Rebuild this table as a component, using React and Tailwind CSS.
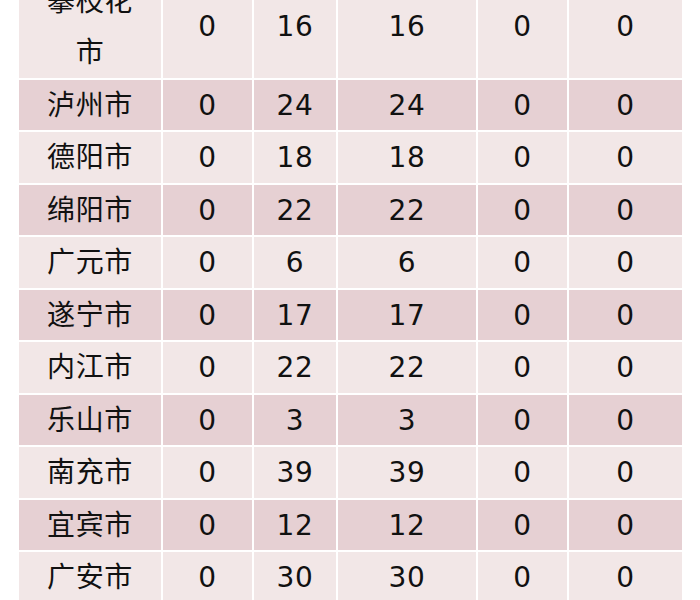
import React from "react";

const rows = [
  ["泸州市", 0, 24, 24, 0, 0],
  ["德阳市", 0, 18, 18, 0, 0],
  ["绵阳市", 0, 22, 22, 0, 0],
  ["广元市", 0, 6, 6, 0, 0],
  ["遂宁市", 0, 17, 17, 0, 0],
  ["内江市", 0, 22, 22, 0, 0],
  ["乐山市", 0, 3, 3, 0, 0],
  ["南充市", 0, 39, 39, 0, 0],
  ["宜宾市", 0, 12, 12, 0, 0],
  ["广安市", 0, 30, 30, 0, 0],
];

export default function App() {
  return (
    <div className="w-[700px] h-[600px] overflow-hidden bg-white">
      <div
        className="ml-[19px] -mt-[25px] grid grid-cols-[142px_89px_82px_138px_89px_113px] gap-[2px] text-[28px] tracking-[0.6px] text-[#111]"
        style={{ fontFamily: '"DejaVu Sans", "Noto Sans CJK SC", sans-serif' }}
      >
        <div className="bg-[#f2e7e7] h-[102.5px] pt-[2px] flex items-center justify-center text-center leading-[51px]">
          攀枝花
          <br />市
        </div>
        {[0, 16, 16, 0, 0].map((v, j) => (
          <div key={j} className="bg-[#f2e7e7] h-[102.5px] pt-[2px] flex items-center justify-center">
            {v}
          </div>
        ))}
        {rows.map((r, i) =>
          r.map((v, j) => (
            <div
              key={i + "-" + j}
              className={
                (i % 2 === 0 ? "bg-[#e6d0d3]" : "bg-[#f2e7e7]") +
                " h-[50.5px] pt-[2px] flex items-center justify-center"
              }
            >
              {v}
            </div>
          ))
        )}
      </div>
    </div>
  );
}
